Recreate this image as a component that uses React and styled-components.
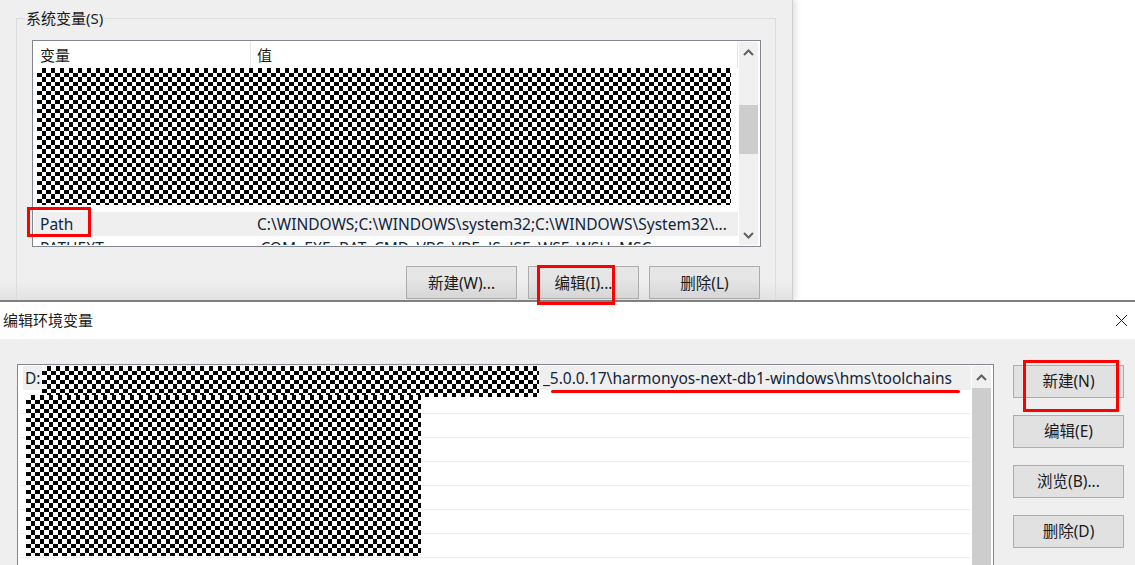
import React from "react";
import styled, { createGlobalStyle } from "styled-components";

const Global = createGlobalStyle`
  html, body { margin: 0; padding: 0; background: #fff; overflow: hidden; }
`;

const UI = `"Noto Sans", "Noto Sans CJK SC", "Liberation Sans", sans-serif`;
const TEXT = "#12243a";

const Page = styled.div`
  position: relative;
  width: 1135px;
  height: 565px;
  overflow: hidden;
  font-family: ${UI};
  font-size: 15.5px;
  color: #1a1a1a;
`;

const TopWindow = styled.div`
  width: 793px;
  height: 300px;
  box-sizing: border-box;
  background: linear-gradient(#efefef 280px, #e2e2e2 300px);
  border-right: 1px solid #cfcfcf;
  box-shadow: 3px 0 6px rgba(0, 0, 0, 0.12);
  padding: 18px 0 0 16px;
`;

const Group = styled.div`
  position: relative;
  height: 290px;
  width: 760px;
  box-sizing: border-box;
  border: 1px solid #dcdcdc;
  border-bottom: 0;
  padding: 21px 0 0 15px;
`;

const GroupTitle = styled.span`
  position: absolute;
  left: 8px;
  top: -11px;
  padding: 0 1px;
  background: #efefef;
  font-size: 15px;
  line-height: 20px;
`;

const ListFrame = styled.div`
  width: 729px;
  height: 207px;
  box-sizing: border-box;
  border: 1px solid #82878f;
  background: #fff;
  display: flex;
  padding: 1px 2px 1px 1px;
`;

const ListBody = styled.div`
  flex: 1;
  min-width: 0;
  display: flex;
  flex-direction: column;
  overflow: hidden;
`;

const HeadRow = styled.div`
  height: 26px;
  display: flex;
  flex: none;
  font-size: 15px;
  line-height: 27px;
`;

const HeadCell = styled.div`
  width: ${(p) => p.$w}px;
  box-sizing: border-box;
  padding-left: 6px;
  border-right: 1px solid #e5e5e5;
`;

const Redacted = styled.div`
  flex: none;
  width: ${(p) => p.$w}px;
  height: ${(p) => p.$h}px;
  margin-left: ${(p) => p.$ml || 0}px;
  background: conic-gradient(at 5px 5px, #000 25%, #fff 0 50%, #000 0 75%, #fff 0) 0 0 / 9px 9px;
`;

const VarRow = styled.div`
  flex: none;
  display: flex;
  height: 24px;
  line-height: 24px;
  margin-top: ${(p) => p.$mt || 0}px;
  background: ${(p) => (p.$sel ? "#efefef" : "#fff")};
  white-space: nowrap;
  overflow: hidden;
`;

const VarName = styled.div`
  width: 223px;
  box-sizing: border-box;
  padding-left: 6px;
  flex: none;
  color: ${TEXT};
`;

const VarValue = styled.div`
  flex: 1;
  overflow: hidden;
  color: ${TEXT};
`;

const ScrollBar = styled.div`
  flex: none;
  width: 19px;
  margin-left: 1px;
  background: #f0f0f0;
  display: flex;
  flex-direction: column;
  align-items: stretch;
`;

const ScrollBtn = styled.div`
  flex: none;
  height: ${(p) => p.$h}px;
  display: flex;
  align-items: center;
  justify-content: center;
`;

const Thumb = styled.div`
  flex: none;
  height: ${(p) => p.$h}px;
  margin-top: ${(p) => p.$mt || 0}px;
  background: #cdcdcd;
`;

const Spacer = styled.div`
  flex: 1;
`;

const ButtonRow = styled.div`
  display: flex;
  gap: 10px;
  margin: 19px 0 0 374px;
`;

const Btn = styled.div`
  flex: none;
  width: 111px;
  height: 33px;
  margin-right: ${(p) => p.$mr || 0}px;
  box-sizing: border-box;
  border: 1px solid #adadad;
  background: ${(p) => (p.$flat ? "#e1e1e1" : "linear-gradient(#e6e6e6 35%, #d6d6d6)")};
  display: flex;
  align-items: center;
  justify-content: center;
  white-space: nowrap;
  padding-bottom: ${(p) => (p.$flat ? 2 : 0)}px;
`;

const Dialog = styled.div`
  position: absolute;
  left: 0;
  top: 300px;
  width: 1135px;
  height: 265px;
  border-top: 2px solid #808080;
  background: #efefef;
  display: flex;
  flex-direction: column;
`;

const TitleBar = styled.div`
  flex: none;
  height: 37px;
  background: #fff;
  display: flex;
  align-items: center;
  justify-content: space-between;
  padding: 0 7px 0 3px;
`;

const TitleText = styled.span`
  font-size: 15px;
  line-height: 20px;
  margin-bottom: 1px;
`;

const DialogBody = styled.div`
  flex: 1;
  display: flex;
  padding: 25px 11px 0 17px;
`;

const PathList = styled.div`
  flex: none;
  width: 977px;
  height: 210px;
  box-sizing: border-box;
  border: 1px solid #82878f;
  border-bottom: 0;
  background: #fff;
  display: flex;
  padding: 1px 2px 0 1px;
`;

const PathBody = styled.div`
  position: relative;
  flex: 1;
  min-width: 0;
  display: flex;
  flex-direction: column;
  overflow: hidden;
`;

const PathFirst = styled.div`
  flex: none;
  height: 24px;
  margin-left: 4px;
  padding: 0 19px 0 2px;
  background: #efefef;
  display: flex;
  align-items: center;
  justify-content: space-between;
  color: ${TEXT};
  white-space: nowrap;
`;

const PathLines = styled.div`
  flex: 1;
  padding-top: 169px;
  background: repeating-linear-gradient(#fff 0 23px, #efefef 23px 24px);
  color: ${TEXT};
  line-height: 24px;
  white-space: nowrap;
`;

const PathLastText = styled.div`
  padding-left: 6px;
`;

const PathCover = styled(Redacted)`
  position: absolute;
  left: ${(p) => p.$x}px;
  top: ${(p) => p.$y}px;
`;

const SideButtons = styled.div`
  flex: none;
  margin: 1px 0 0 19px;
  display: flex;
  flex-direction: column;
  gap: 17px;
`;

const Mark = styled.div`
  position: absolute;
  box-sizing: border-box;
  left: ${(p) => p.$x}px;
  top: ${(p) => p.$y}px;
  width: ${(p) => p.$w}px;
  height: ${(p) => p.$h}px;
  border: 3px solid #f00;
`;

const Underline = styled.div`
  position: absolute;
  left: 551px;
  top: 390px;
  width: 409px;
  height: 3px;
  border-radius: 2px;
  background: #f00;
`;

const Chevron = ({ up }) => (
  <svg width="11" height="7" viewBox="0 0 11 7">
    <path
      d={up ? "M1 6 L5.5 1.5 L10 6" : "M1 1 L5.5 5.5 L10 1"}
      fill="none"
      stroke="#606060"
      strokeWidth="2"
    />
  </svg>
);

const Close = () => (
  <svg width="13" height="13" viewBox="0 0 13 13">
    <path d="M1 1 L12 12 M12 1 L1 12" stroke="#222" strokeWidth="1" />
  </svg>
);

export default function App() {
  return (
    <Page>
      <Global />
      <TopWindow>
        <Group>
          <GroupTitle>系统变量(S)</GroupTitle>
          <ListFrame>
            <ListBody>
              <HeadRow>
                <HeadCell $w={217}>变量</HeadCell>
                <HeadCell $w={487}>值</HeadCell>
              </HeadRow>
              <Redacted $w={694} $h={137} $ml={3} />
              <VarRow $sel $mt={7}>
                <VarName>Path</VarName>
                <VarValue>C:\WINDOWS;C:\WINDOWS\system32;C:\WINDOWS\System32\...</VarValue>
              </VarRow>
              <VarRow>
                <VarName>PATHEXT</VarName>
                <VarValue>.COM;.EXE;.BAT;.CMD;.VBS;.VBE;.JS;.JSE;.WSF;.WSH;.MSC</VarValue>
              </VarRow>
            </ListBody>
            <ScrollBar>
              <ScrollBtn $h={20}><Chevron up /></ScrollBtn>
              <Thumb $h={49} $mt={43} />
              <Spacer />
              <ScrollBtn $h={20}><Chevron /></ScrollBtn>
            </ScrollBar>
          </ListFrame>
          <ButtonRow>
            <Btn $mr={1}>新建(W)...</Btn>
            <Btn>编辑(I)...</Btn>
            <Btn>删除(L)</Btn>
          </ButtonRow>
        </Group>
      </TopWindow>

      <Dialog>
        <TitleBar>
          <TitleText>编辑环境变量</TitleText>
          <Close />
        </TitleBar>
        <DialogBody>
          <PathList>
            <PathBody>
              <PathFirst>
                <span>D:</span>
                <span>_5.0.0.17\harmonyos-next-db1-windows\hms\toolchains</span>
              </PathFirst>
              <PathLines>
                <PathLastText>C:\Program Files\dotnet\;C:\Program Files\nodejs\bin;</PathLastText>
              </PathLines>
              <PathCover $x={23} $y={0} $w={497} $h={31} />
              <PathCover $x={7} $y={29} $w={395} $h={161} />
            </PathBody>
            <ScrollBar>
              <ScrollBtn $h={22}><Chevron up /></ScrollBtn>
              <Thumb $h={200} />
            </ScrollBar>
          </PathList>
          <SideButtons>
            <Btn $flat>新建(N)</Btn>
            <Btn $flat>编辑(E)</Btn>
            <Btn $flat>浏览(B)...</Btn>
            <Btn $flat>删除(D)</Btn>
          </SideButtons>
        </DialogBody>
      </Dialog>

      <Mark $x={27} $y={207} $w={64} $h={30} />
      <Mark $x={537} $y={265} $w={78} $h={40} />
      <Mark $x={1023} $y={360} $w={96} $h={52} />
      <Underline />
    </Page>
  );
}
